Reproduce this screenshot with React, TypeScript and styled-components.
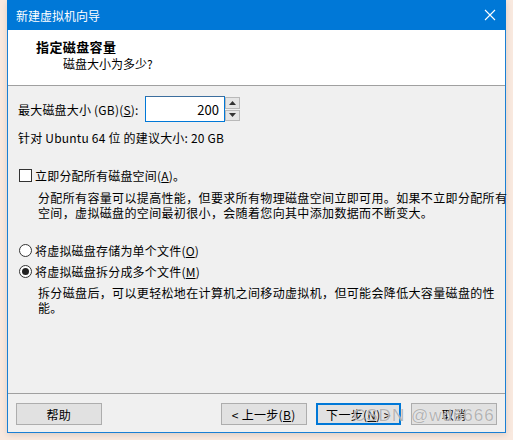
import React from "react";
import styled, { createGlobalStyle } from "styled-components";

const Global = createGlobalStyle`
  html, body { margin: 0; padding: 0; background: #f9e9df; }
  body { width: 513px; height: 440px; overflow: hidden; font-family: "Microsoft YaHei", "Noto Sans CJK SC", "Noto Sans", sans-serif; }
`;

const Page = styled.div`
  width: 513px;
  height: 440px;
  padding-left: 7px;
  box-sizing: border-box;
`;

const Window = styled.div`
  position: relative;
  width: 499px;
  height: 433px;
  box-sizing: border-box;
  border: 1px solid #1a7fd4;
  border-top: none;
  background: #f0f0f0;
  display: flex;
  flex-direction: column;
  box-shadow: 0 2px 6px rgba(0,0,0,0.12);
`;

const TitleBar = styled.div`
  height: 30px;
  margin: 0 -1px;
  background: #0078d7;
  display: flex;
  align-items: center;
  justify-content: space-between;
  padding: 0 10px 0 9px;
  color: #fff;
  font-size: 12px;
`;

const Close = styled.svg`
  width: 12px;
  height: 12px;
`;

const Header = styled.div`
  height: 56px;
  background: #fff;
  border-bottom: 1px solid #a0a0a0;
  box-sizing: border-box;
  padding: 8px 0 0 28px;
  display: flex;
  flex-direction: column;
`;

const HeaderTitle = styled.div`
  font-size: 13px;
  font-weight: bold;
  color: #000;
  line-height: 17px;
  letter-spacing: 0.4px;
`;

const HeaderSub = styled.div`
  font-size: 12px;
  line-height: 15px;
  margin: 1px 0 0 27px;
  color: #000;
`;

const Body = styled.div`
  flex: 1;
  display: flex;
  flex-direction: column;
  padding: 10px 0 0 10px;
  font-size: 12px;
  color: #000;
`;

const Line = styled.div<{ $mt?: number }>`
  line-height: 15px;
  margin-top: ${(p) => p.$mt ?? 0}px;
  white-space: nowrap;
  letter-spacing: 0.2px;
`;

const SizeRow = styled.div`
  display: flex;
  align-items: center;
  height: 26px;
`;

const SizeLabel = styled.span`
  width: 127px;
  line-height: 15px;
  letter-spacing: 0.2px;
`;

const Input = styled.div`
  width: 80px;
  height: 26px;
  box-sizing: border-box;
  border: 1px solid #0078d7;
  border-top-color: #3c6e9e;
  background: #fff;
  display: flex;
  align-items: center;
  justify-content: flex-end;
  padding-right: 5px;
  font-size: 13px;
`;

const Spin = styled.div`
  width: 15px;
  height: 26px;
  display: flex;
  flex-direction: column;
  gap: 1px;
  padding: 1px 0;
  box-sizing: border-box;
`;

const SpinBtn = styled.div`
  flex: 1;
  background: #e5e5e5;
  border: 1px solid #b9b9b9;
  display: flex;
  align-items: center;
  justify-content: center;
`;

const Option = styled.label<{ $mt: number }>`
  display: flex;
  align-items: center;
  gap: 3px;
  height: 15px;
  margin-top: ${(p) => p.$mt}px;
  line-height: 15px;
  letter-spacing: 0.2px;
`;

const Check = styled.span`
  width: 13px;
  height: 13px;
  box-sizing: border-box;
  border: 1px solid #333;
  background: #fff;
  margin-left: 1px;
`;

const Radio = styled.span<{ $on?: boolean }>`
  width: 13px;
  height: 13px;
  box-sizing: border-box;
  border: 1px solid #333;
  border-radius: 50%;
  background: #fff;
  display: flex;
  align-items: center;
  justify-content: center;
  margin-left: 1px;
  &::after {
    content: "";
    width: 7px;
    height: 7px;
    border-radius: 50%;
    background: ${(p) => (p.$on ? "#222" : "transparent")};
  }
`;

const Desc = styled.div<{ $mt: number }>`
  margin: ${(p) => p.$mt}px 0 0 20px;
  line-height: 15px;
  width: 470px;
  letter-spacing: 0.35px;
`;

const U = styled.span`
  text-decoration: underline;
  text-underline-offset: 1px;
`;

const Footer = styled.div`
  border-top: 1px solid #a0a0a0;
  height: 39px;
  box-sizing: border-box;
  padding: 9px 8px 0 8px;
  display: flex;
  align-items: flex-start;
  position: relative;
`;

const Button = styled.div<{ $focus?: boolean; $ml?: number }>`
  width: 86px;
  height: 22px;
  box-sizing: border-box;
  margin-left: ${(p) => p.$ml ?? 0}px;
  background: #e1e1e1;
  border: ${(p) => (p.$focus ? "2px solid #0078d7" : "1px solid #adadad")};
  display: flex;
  align-items: center;
  justify-content: center;
  font-size: 12px;
  letter-spacing: 0.3px;
`;

const Watermark = styled.div`
  position: absolute;
  z-index: 2;
  left: 345px;
  top: 13px;
  font-family: "Liberation Sans", Arial, sans-serif;
  font-size: 17px;
  line-height: 18px;
  color: rgba(150, 150, 150, 0.7);
  text-shadow: 0 0 1px rgba(255, 255, 255, 0.9);
  letter-spacing: 1px;
  white-space: nowrap;
  pointer-events: none;
`;

const Tri = ({ up }: { up?: boolean }) => (
  <svg width="7" height="4" viewBox="0 0 7 4">
    <path d={up ? "M0 4 L3.5 0 L7 4 Z" : "M0 0 L3.5 4 L7 0 Z"} fill="#333" />
  </svg>
);

export default function App() {
  return (
    <>
      <Global />
      <Page>
        <Window>
          <TitleBar>
            <span>新建虚拟机向导</span>
            <Close viewBox="0 0 12 12">
              <path d="M1 1 L11 11 M11 1 L1 11" stroke="#fff" strokeWidth="1.1" />
            </Close>
          </TitleBar>
          <Header>
            <HeaderTitle>指定磁盘容量</HeaderTitle>
            <HeaderSub>磁盘大小为多少?</HeaderSub>
          </Header>
          <Body>
            <SizeRow>
              <SizeLabel>
                最大磁盘大小 (GB)(<U>S</U>):
              </SizeLabel>
              <Input>200</Input>
              <Spin>
                <SpinBtn>
                  <Tri up />
                </SpinBtn>
                <SpinBtn>
                  <Tri />
                </SpinBtn>
              </Spin>
            </SizeRow>
            <Line $mt={8}>针对 Ubuntu 64 位 的建议大小: 20 GB</Line>
            <Option $mt={23}>
              <Check />
              <span>
                立即分配所有磁盘空间(<U>A</U>)。
              </span>
            </Option>
            <Desc $mt={7}>
              分配所有容量可以提高性能，但要求所有物理磁盘空间立即可用。如果不立即分配所有空间，虚拟磁盘的空间最初很小，会随着您向其中添加数据而不断变大。
            </Desc>
            <Option $mt={23}>
              <Radio />
              <span>
                将虚拟磁盘存储为单个文件(<U>O</U>)
              </span>
            </Option>
            <Option $mt={6}>
              <Radio $on />
              <span>
                将虚拟磁盘拆分成多个文件(<U>M</U>)
              </span>
            </Option>
            <Desc $mt={6}>
              拆分磁盘后，可以更轻松地在计算机之间移动虚拟机，但可能会降低大容量磁盘的性能。
            </Desc>
          </Body>
          <Footer>
            <Button>帮助</Button>
            <Button $ml={119}>
              &lt; 上一步(<U>B</U>)
            </Button>
            <Button $ml={9} $focus>
              下一步(<U>N</U>) &gt;
            </Button>
            <Button $ml={10}>取消</Button>
            <Watermark>CSDN @wd6666</Watermark>
          </Footer>
        </Window>
      </Page>
    </>
  );
}
